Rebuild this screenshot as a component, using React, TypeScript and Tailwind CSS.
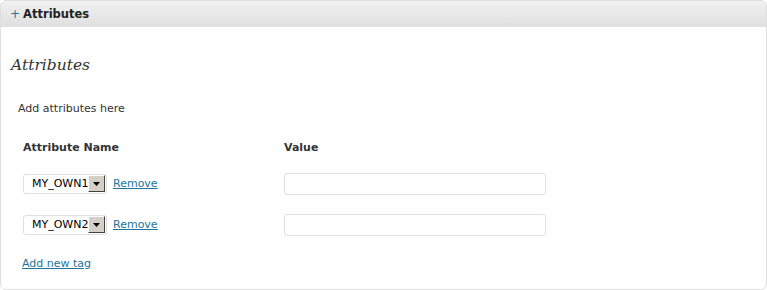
const rows = ['MY_OWN1', 'MY_OWN2'];

function SelectBox({ value }: { value: string }) {
  return (
    <div className="flex h-[20px] w-[84px] items-center rounded-[3px] border border-[#dfdfdf] bg-white pl-[8px] pr-[1px]">
      <span className="flex-1 text-[11px] leading-none text-black">{value}</span>
      <span className="flex h-[17px] w-[17px] items-center justify-center border border-t-[#ffffff] border-l-[#ffffff] border-r-[#404040] border-b-[#404040] bg-[#d4d0c8]">
        <svg width="7" height="4" viewBox="0 0 7 4">
          <path d="M0 0h7L3.5 4z" fill="#000" />
        </svg>
      </span>
    </div>
  );
}

export default function App() {
  return (
    <div className="h-[290px] w-[767px] bg-white font-['DejaVu_Sans',Verdana,sans-serif] text-[#333]">
      <div className="h-full overflow-hidden rounded-[6px] border border-[#dfdfdf]">
        {/* header */}
        <div className="flex h-[26px] items-baseline gap-[3px] bg-gradient-to-b from-[#f1f1f1] to-[#dfdfdf] pl-[9px] pt-[7px]">
          <span className="text-[12px] leading-none text-[#21759b]">+</span>
          <span className="text-[11.5px] font-bold leading-none text-[#222]">Attributes</span>
        </div>

        {/* body */}
        <div className="px-[10px] pt-[31px]">
          <h2 className="font-['DejaVu_Serif',Georgia,serif] text-[15.5px] italic leading-none text-[#333]">
            Attributes
          </h2>
          <p className="mt-[29px] pl-[7px] text-[11px] leading-none text-[#333]">Add attributes here</p>

          <div className="mt-[28px] grid grid-cols-[261px_1fr] pl-[12px]">
            <div className="text-[11px] font-bold leading-none text-[#333]">Attribute Name</div>
            <div className="text-[11px] font-bold leading-none text-[#333]">Value</div>
          </div>

          <div className="mt-[20px] flex flex-col gap-[19px] pl-[12px]">
            {rows.map((r) => (
              <div key={r} className="grid grid-cols-[261px_1fr] items-center">
                <div className="flex items-center gap-[6px]">
                  <SelectBox value={r} />
                  <a href="#" className="text-[11px] leading-none text-[#21759b] underline">
                    Remove
                  </a>
                </div>
                <input
                  type="text"
                  className="h-[22px] w-[262px] rounded-[3px] border border-[#dfdfdf] bg-white px-[4px] text-[11px] outline-none"
                />
              </div>
            ))}
          </div>

          <div className="mt-[14px] pl-[11px]">
            <a href="#" className="text-[11px] leading-none text-[#21759b] underline">
              Add new tag
            </a>
          </div>
        </div>
      </div>
    </div>
  );
}
